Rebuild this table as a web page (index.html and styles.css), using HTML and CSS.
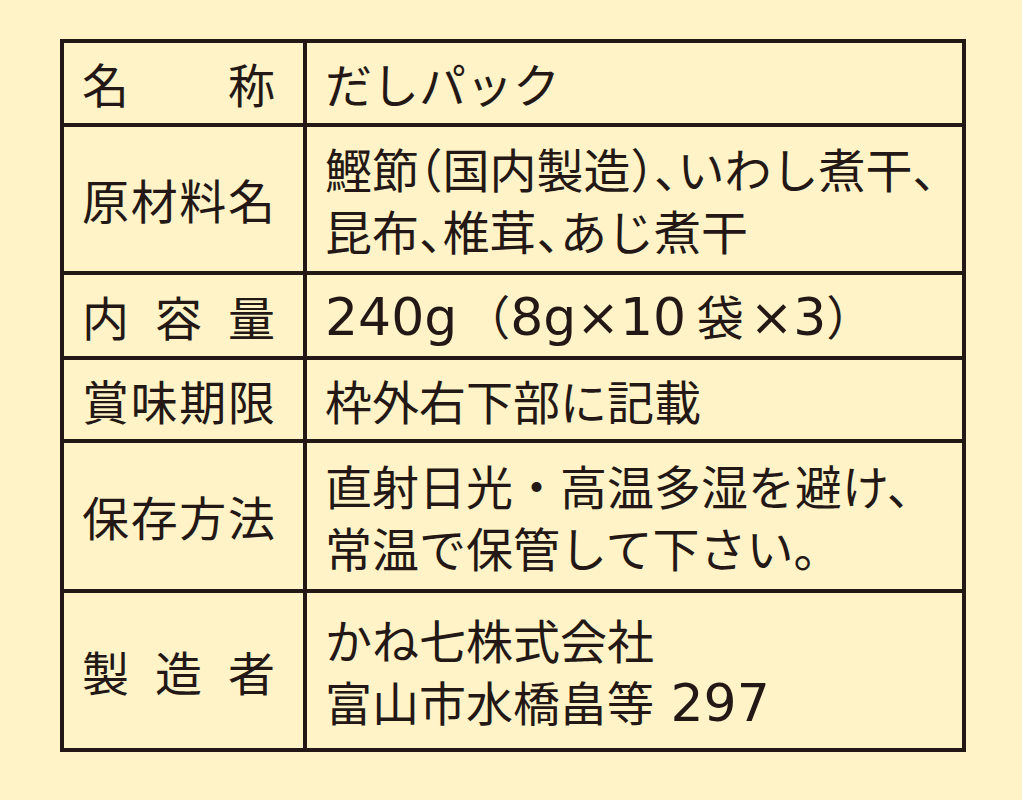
FILE: index.html
```html
<!DOCTYPE html>
<html lang="ja">
<head>
<meta charset="utf-8">
<title>だしパック 表示</title>
<link rel="stylesheet" href="styles.css">
</head>
<body>
<div class="page">
  <div class="label-table">
    <div class="cell head"><span>名</span><span>称</span></div>
    <div class="cell value"><span class="line">だしパック</span></div>

    <div class="cell head"><span>原</span><span>材</span><span>料</span><span>名</span></div>
    <div class="cell value halt"><span class="line">鰹節（国内製造）、いわし煮干、</span><span class="line">昆布、椎茸、あじ煮干</span></div>

    <div class="cell head"><span>内</span><span>容</span><span>量</span></div>
    <div class="cell value"><span class="line"><span class="latin">240g</span><span class="open">（</span><span class="latin">8g×10</span> 袋<span class="latin times">×3</span>）</span></div>

    <div class="cell head"><span>賞</span><span>味</span><span>期</span><span>限</span></div>
    <div class="cell value"><span class="line">枠外右下部に記載</span></div>

    <div class="cell head"><span>保</span><span>存</span><span>方</span><span>法</span></div>
    <div class="cell value"><span class="line">直射日光・高温多湿を避け、</span><span class="line">常温で保管して下さい。</span></div>

    <div class="cell head"><span>製</span><span>造</span><span>者</span></div>
    <div class="cell value"><span class="line">かね七株式会社</span><span class="line">富山市水橋畠等<span class="latin"> 297</span></span></div>
  </div>
</div>
</body>
</html>
```

FILE: styles.css
```css
html, body {
  margin: 0;
  padding: 0;
  background: #fff3c7;
}

body {
  width: 1022px;
  height: 800px;
  overflow: hidden;
  font-family: "Noto Sans CJK JP", "Noto Sans", sans-serif;
  color: #231815;
}

.page {
  padding: 39px 0 0 60px;
}

.label-table {
  width: 906px;
  box-sizing: border-box;
  display: grid;
  grid-template-columns: 239px 655px;
  grid-template-rows: 80px 144px 81px 79px 146px 155px;
  gap: 4px;
  padding: 4px;
  background: #231815;
}

.cell {
  background: #fff3c7;
  font-size: 47px;
  font-weight: 400;
  line-height: 62px;
  white-space: nowrap;
  display: flex;
}

.head {
  flex-direction: row;
  align-items: center;
  justify-content: space-between;
  padding: 0 28px 0 18px;
}

.value {
  flex-direction: column;
  align-items: flex-start;
  justify-content: center;
  padding: 0 0 0 18px;
}

.line {
  display: block;
}

.latin {
  font-family: "DejaVu Sans", "Noto Sans CJK JP", sans-serif;
  font-size: 52px;
}

.open {
  margin-left: 6px;
}

.times {
  margin-left: 6px;
}

.halt {
  font-feature-settings: "halt";
}
```
